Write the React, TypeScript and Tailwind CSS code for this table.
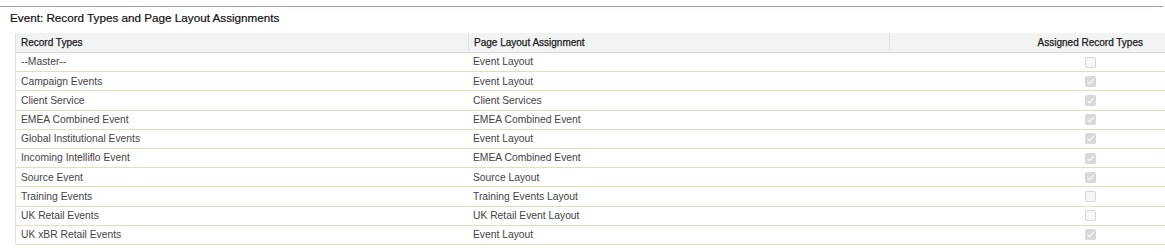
const rows: [string, string, boolean][] = [
  ["--Master--", "Event Layout", false],
  ["Campaign Events", "Event Layout", true],
  ["Client Service", "Client Services", true],
  ["EMEA Combined Event", "EMEA Combined Event", true],
  ["Global Institutional Events", "Event Layout", true],
  ["Incoming Intelliflo Event", "EMEA Combined Event", true],
  ["Source Event", "Source Layout", true],
  ["Training Events", "Training Events Layout", false],
  ["UK Retail Events", "UK Retail Event Layout", false],
  ["UK xBR Retail Events", "Event Layout", true],
];

function Check({ on }: { on: boolean }) {
  if (!on) {
    return (
      <span className="block w-[11px] h-[11px] rounded-[2px] border border-[#d6d6d6] bg-[#f7f7f7]" />
    );
  }
  return (
    <span className="flex items-center justify-center w-[11px] h-[11px] rounded-[2px] bg-[#d9d9d9]">
      <svg width="9" height="9" viewBox="0 0 9 9">
        <path d="M1.5 4.8 L3.5 6.8 L7.6 2.2" fill="none" stroke="#f4f4f4" strokeWidth="1.5" />
      </svg>
    </span>
  );
}

export default function App() {
  return (
    <div className="w-[1165px] h-[252px] bg-white pt-[6px] font-['Liberation_Sans',Arial,sans-serif] overflow-hidden">
      <div className="border-t border-[#9c9eb5] w-[1163px]" />
      <div className="pl-[10px] pt-[4px] h-[26px] text-[11.7px] leading-[14px] text-[#111] [-webkit-text-stroke:0.2px_#111]">
        Event: Record Types and Page Layout Assignments
      </div>
      <div className="ml-[15px] border-l border-[#e0e3e5]">
        <div className="flex h-[20px] bg-[#f2f3f3] border-b border-[#d4dadc] text-[10px] text-[#1a1a1a] [-webkit-text-stroke:0.25px_#1a1a1a] items-stretch">
          <div className="w-[452px] pl-[5px] flex items-center">Record Types</div>
          <div className="w-[421px] pl-[5px] flex items-center border-l border-[#e0e3e5]">Page Layout Assignment</div>
          <div className="flex-1 pr-[22px] flex items-center justify-end border-l border-[#e0e3e5]">
            Assigned Record Types
          </div>
        </div>
        {rows.map(([name, layout, on]) => (
          <div key={name} className="flex h-[19.2px] border-b border-[#e3dfba] text-[10.3px] text-[#444] items-center">
            <div className="w-[452px] pl-[5px]">{name}</div>
            <div className="w-[421px] pl-[5px]">{layout}</div>
            <div className="flex-1 pr-[22px] flex justify-end">
              <div className="w-[105px] flex justify-center">
                <Check on={on} />
              </div>
            </div>
          </div>
        ))}
      </div>
    </div>
  );
}
